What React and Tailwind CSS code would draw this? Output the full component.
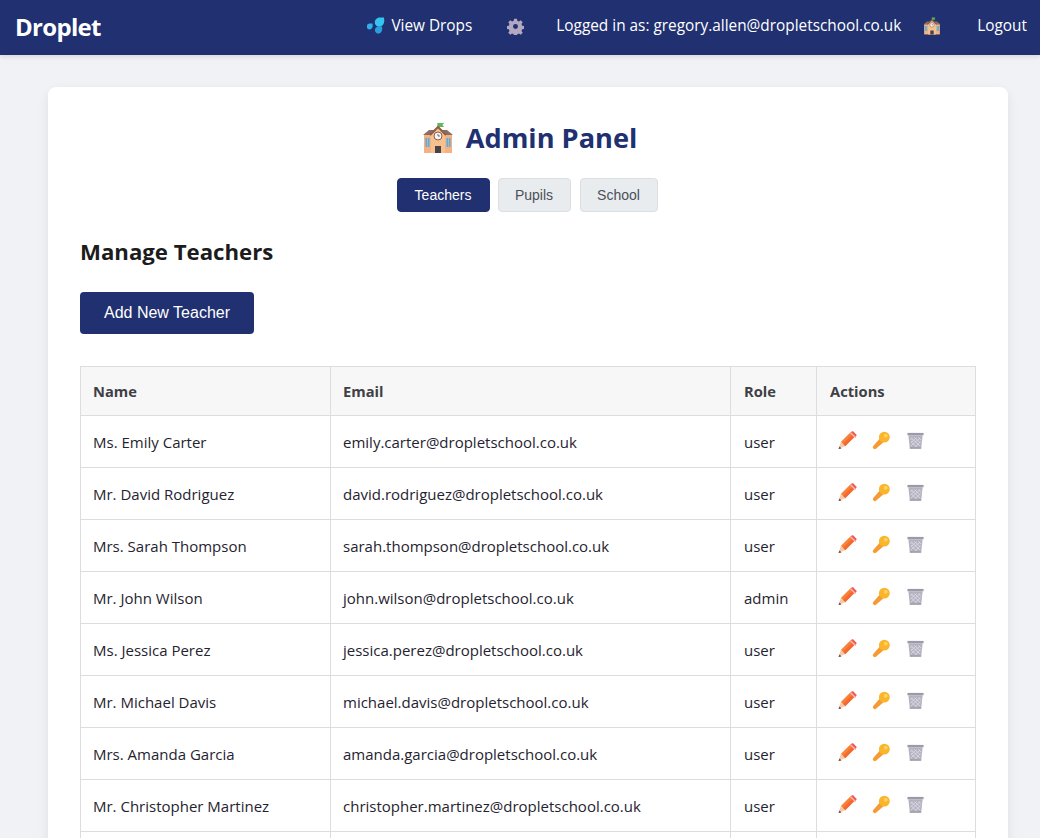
import React from "react";

const SEGOE = "font-['Open_Sans','Noto_Sans',sans-serif]";

const teachers = [
  ["Ms. Emily Carter", "emily.carter@dropletschool.co.uk", "user"],
  ["Mr. David Rodriguez", "david.rodriguez@dropletschool.co.uk", "user"],
  ["Mrs. Sarah Thompson", "sarah.thompson@dropletschool.co.uk", "user"],
  ["Mr. John Wilson", "john.wilson@dropletschool.co.uk", "admin"],
  ["Ms. Jessica Perez", "jessica.perez@dropletschool.co.uk", "user"],
  ["Mr. Michael Davis", "michael.davis@dropletschool.co.uk", "user"],
  ["Mrs. Amanda Garcia", "amanda.garcia@dropletschool.co.uk", "user"],
  ["Mr. Christopher Martinez", "christopher.martinez@dropletschool.co.uk", "user"],
];

function SchoolIcon({ className }) {
  return (
    <svg viewBox="0 0 32 32" className={className}>
      <path d="M16 1v7" stroke="#6b7280" strokeWidth="1" />
      <path d="M16 1h6l-1.500 2 1.500 2h-6z" fill="#5fb85a" />
      <path d="M1 13l6-5h18l6 5z" fill="#8d6e63" />
      <path d="M2 13h28v18H2z" fill="#f3b27f" />
      <path d="M9 13l7-7 7 7v18H9z" fill="#f6c08f" />
      <path d="M8 13l8-8 8 8" fill="none" stroke="#8d5f4a" strokeWidth="2" />
      <circle cx="16" cy="14" r="4" fill="#f3f4f6" stroke="#8d5f4a" />
      <path d="M16 12v2h2" fill="none" stroke="#4b5563" strokeWidth="0.8" />
      <path d="M13 24h6v7h-6z" fill="#47424a" />
      <path d="M3.500 16h4v9h-4zM24.500 16h4v9h-4z" fill="#55aee8" />
      <path d="M5.500 16v9M26.500 16v9" stroke="#f3b27f" strokeWidth="0.7" />
    </svg>
  );
}

function DropsIcon() {
  return (
    <svg viewBox="0 0 18 18" className="h-[18px] w-[18px]">
      <path d="M17 0.500c.3 2.500.5 4-.2 5.800a4.600 4.600 0 1 1-6.300-5.300c1.900-.8 4-.5 6.500-.5z" fill="#35c3f0" />
      <path d="M5.500 6.500c.2 1.500.4 2.600-.1 3.800a2.900 2.900 0 1 1-3.800-3.500c1.200-.5 2.400-.3 3.900-.3z" fill="#2fb0ea" />
      <path d="M15 9.500c.3 1.800.4 3-.2 4.500a3.500 3.500 0 1 1-4.700-4.200c1.500-.6 3-.3 4.900-.3z" fill="#2a9fe0" />
    </svg>
  );
}

function GearIcon() {
  return (
    <svg viewBox="0 0 24 24" className="h-[17px] w-[17px]">
      <path
        fill="#b3a8c2"
        fillRule="evenodd"
        d="M10 1h4l.6 3 2.200.9 2.600-1.700 2.800 2.800-1.700 2.600.9 2.200 3 .6v4l-3 .6-.9 2.200 1.700 2.600-2.800 2.800-2.600-1.700-2.200.9-.6 3h-4l-.6-3-2.200-.9-2.600 1.700-2.800-2.800 1.700-2.600-.9-2.200-3-.6v-4l3-.6.9-2.200L1.800 6l2.800-2.800 2.600 1.700L9.400 4zM12 8.500a3.500 3.500 0 1 0 0 7 3.500 3.500 0 0 0 0-7z"
      />
    </svg>
  );
}

function PencilIcon() {
  return (
    <svg viewBox="0 0 20 20" className="h-[19px] w-[19px]">
      <path d="M3 11.500L13.500 1l4.500 4.500L7.500 16z" fill="#f98038" />
      <path d="M5.200 13.700L15.700 3.200 18 5.500 7.500 16z" fill="#f4692f" />
      <path d="M13 1.500L14.500.5c.6-.4 1.200-.4 1.700.1l3 3c.5.500.4 1.100 0 1.600L18 6.500z" fill="#f2575b" />
      <path d="M12.500 2l1-1 5.500 5.500-1 1z" fill="#f6c0b2" />
      <path d="M3 11.500L7.500 16 .5 19z" fill="#f4c9a6" />
      <path d="M1.600 16.400l2.100 2.100-3.200.5z" fill="#5b4a52" />
    </svg>
  );
}

function KeyIcon() {
  return (
    <svg viewBox="0 0 20 20" className="h-[19px] w-[19px]">
      <path d="M9 7l4 4-8.500 7.500a1.800 1.800 0 0 1-3-3z" fill="#f79a35" />
      <circle cx="13" cy="6.500" r="5.700" fill="#fbb52b" />
      <circle cx="14.500" cy="5" r="2" fill="#ffd35e" />
    </svg>
  );
}

function TrashIcon() {
  return (
    <svg viewBox="0 0 20 20" className="h-[19px] w-[19px]">
      <path d="M1.500 2h17v2.500h-17z" fill="#9d9aa8" />
      <path d="M2.500 4.500h15L16 18.500H4z" fill="#b5b2c0" />
      <path
        d="M5 7l10 9M9 7l6 5.500M13 7l3 2.500M5 11l6 5.500M15 7L5 16M11 7l-6 5.500M7 7L4.500 9.500M15.500 11L10 16.500"
        stroke="#dedce6"
        strokeWidth="0.9"
      />
      <path d="M4 17.500h12v1H4z" fill="#8d8a98" />
    </svg>
  );
}

function TeacherRow({ name, email, role }) {
  return (
    <tr>
      <td className="h-[52px] border border-[#dddddd] px-3 pt-[2px] text-[#1f2430]">{name}</td>
      <td className="border border-[#dddddd] px-3 pt-[2px] text-[#1f2430]">{email}</td>
      <td className="border border-[#dddddd] px-[13px] pt-[2px] text-[#1f2430]">{role}</td>
      <td className="border border-[#dddddd] px-[13px]">
        <div className="flex items-center gap-[15px] pb-[3px] pl-2">
          <PencilIcon />
          <KeyIcon />
          <TrashIcon />
        </div>
      </td>
    </tr>
  );
}

export default function App() {
  return (
    <div className={`h-[838px] overflow-hidden bg-[#f0f2f5] ${SEGOE} text-[15px]`}>
      <nav className="flex h-[55px] items-center justify-between bg-[#203070] pr-[13px] pb-[3px] pl-[15px] text-white shadow-[0_2px_4px_rgba(0,0,0,0.1)]">
        <span className="pt-[2px] text-[24px] font-bold tracking-[-0.7px]">Droplet</span>
        <div className="flex items-center text-[15.36px]">
          <span className="flex items-center gap-[6px]">
            <DropsIcon />
            View Drops
          </span>
          <span className="ml-[35px]">
            <GearIcon />
          </span>
          <span className="ml-[32px]">Logged in as: gregory.allen@dropletschool.co.uk</span>
          <SchoolIcon className="ml-[22px] h-[18px] w-[18px]" />
          <span className="ml-[36px]">Logout</span>
        </div>
      </nav>

      <main className="mt-[32px] ml-[48px] w-[960px] rounded-lg bg-white p-8 shadow-[0_4px_12px_rgba(0,0,0,0.08)]">
        <h1 className="flex items-center justify-center gap-[12px] pl-[3px] text-[27.2px] leading-[38px] font-bold text-[#203070]">
          <SchoolIcon className="h-[32px] w-[32px]" />
          Admin Panel
        </h1>

        <div className="mt-[21px] flex justify-center gap-[8px] pr-[2px] font-['Liberation_Sans',sans-serif] text-[14px]">
          <button className="h-[34px] w-[93px] rounded border border-[#203070] bg-[#203070] text-white">Teachers</button>
          <button className="h-[34px] w-[73px] rounded border border-[#dcdfe2] bg-[#e9ecef] text-[#495057]">Pupils</button>
          <button className="ml-[1px] h-[34px] w-[78px] rounded border border-[#dcdfe2] bg-[#e9ecef] text-[#495057]">School</button>
        </div>

        <h2 className="mt-[23px] text-[22.2px] leading-[34px] font-bold text-[#1c1c1c]">Manage Teachers</h2>

        <button className="mt-[23px] block h-[42px] w-[174px] rounded bg-[#203070] font-['Liberation_Sans',sans-serif] text-[16px] text-white">
          Add New Teacher
        </button>

        <table className="mt-[32px] w-[895px] table-fixed border-collapse">
          <colgroup>
            <col className="w-[250px]" />
            <col className="w-[400px]" />
            <col className="w-[86px]" />
            <col className="w-[159px]" />
          </colgroup>
          <thead>
            <tr className="bg-[#f7f7f7] text-left text-[14.7px] font-bold text-[#3f3f46]">
              <th className="h-[49px] border border-[#dddddd] px-3">Name</th>
              <th className="border border-[#dddddd] px-3">Email</th>
              <th className="border border-[#dddddd] px-[13px]">Role</th>
              <th className="border border-[#dddddd] px-[13px]">Actions</th>
            </tr>
          </thead>
          <tbody>
            {teachers.map(([name, email, role]) => (
              <TeacherRow key={email} name={name} email={email} role={role} />
            ))}
            {/* next row starts right at the bottom of the window */}
            <tr>
              <td className="h-[52px] border border-[#dddddd]" />
              <td className="border border-[#dddddd]" />
              <td className="border border-[#dddddd]" />
              <td className="border border-[#dddddd]" />
            </tr>
          </tbody>
        </table>
      </main>
    </div>
  );
}
